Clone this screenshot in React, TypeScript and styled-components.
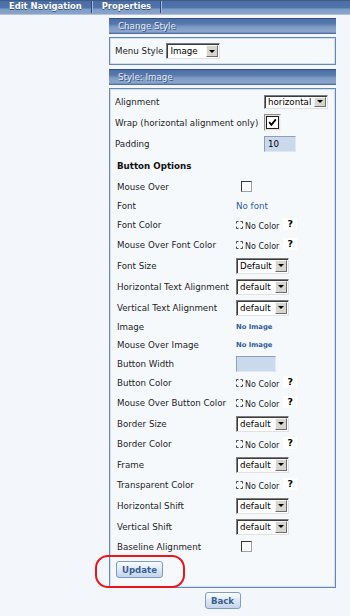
import React from 'react';
import styled, { createGlobalStyle } from 'styled-components';

const GlobalStyle = createGlobalStyle`
  html, body {
    margin: 0;
    padding: 0;
    background: #f3f7fb;
  }
  body {
    font-family: "DejaVu Sans", Verdana, sans-serif;
    font-size: 8.7px;
    color: #1c1c1c;
  }
`;

const TopBar = styled.div`
  display: flex;
  align-items: stretch;
  height: 14px;
  background: linear-gradient(
    to bottom,
    #3c4660 0,
    #4a6ea6 1px,
    #5174aa 8px,
    #7f9cc6 9px,
    #8aa4cb 14px
  );
  border-bottom: 1px solid #b4c2d8;
`;

const Tab = styled.div`
  padding: 0 9px;
  color: #fff;
  font-weight: bold;
  font-size: 8.4px;
  line-height: 13px;
  white-space: nowrap;
  text-shadow: 0 1px 0 #33507f;
`;

const TabSeparator = styled.div`
  width: 2px;
  margin: 1px 0;
  background: linear-gradient(to right, #2f4a78 50%, #a3b7d6 50%);
`;

const Main = styled.div`
  padding: 3px 14px 0 109px;
`;

const SectionHeader = styled.div<{ $gap?: number }>`
  box-sizing: border-box;
  height: 16px;
  margin-top: ${(p) => p.$gap ?? 0}px;
  padding-left: 9px;
  line-height: 15px;
  color: #e2e9f4;
  text-shadow: 1px 1px 0 #35517f;
  border-top: 1px solid #34528a;
  background: linear-gradient(
    to bottom,
    #4d6fa6 0,
    #5878ad 5px,
    #7e9bc5 8px,
    #8ca7cd 13px,
    #5e7cab 14px,
    #46659a 15px
  );
`;

const Box = styled.div<{ $pad: string }>`
  margin-top: 3px;
  border: 1px solid #6787b6;
  box-shadow: inset 0 0 0 1px #d3deec;
  background: #f6f9fc;
  padding: ${(p) => p.$pad};
`;

const InlineRow = styled.div`
  display: flex;
  align-items: center;
  gap: 3px;
`;

const SelectBox = styled.div<{ $w: number; $h?: number }>`
  display: inline-flex;
  align-items: stretch;
  box-sizing: border-box;
  width: ${(p) => p.$w}px;
  height: ${(p) => p.$h ?? 16}px;
  background: #fff;
  border: 1px solid;
  border-color: #7c7c7c #e2e2e2 #e2e2e2 #7c7c7c;
  box-shadow: inset 1px 1px 0 #3c3c3c;
  padding: 1px 1px 1px 3px;
`;

const SelectValue = styled.span`
  flex: 1;
  display: flex;
  align-items: center;
  color: #000;
  white-space: nowrap;
  overflow: hidden;
`;

const SelectArrow = styled.span`
  width: 12px;
  box-sizing: border-box;
  background: #d8d5cf;
  border: 1px solid;
  border-color: #f6f6f6 #6e6e6e #6e6e6e #f6f6f6;
  display: flex;
  align-items: center;
  justify-content: center;
  &::after {
    content: '';
    border-left: 3px solid transparent;
    border-right: 3px solid transparent;
    border-top: 3px solid #000;
  }
`;

const TopGrid = styled.div`
  display: grid;
  grid-template-columns: 149px auto;
  grid-auto-rows: 21px;
  align-items: center;
`;

const Options = styled.div`
  padding-left: 2px;
`;

const OptionsHeading = styled.div`
  height: 23px;
  display: flex;
  align-items: center;
  font-weight: bold;
  color: #111;
`;

const OptionRow = styled.div<{ $h: number }>`
  display: grid;
  grid-template-columns: 119px auto;
  align-items: center;
  height: ${(p) => p.$h}px;
`;

const Label = styled.span`
  white-space: nowrap;
`;

const Control = styled.div`
  display: flex;
  align-items: center;
`;

const CheckBox = styled.span`
  display: inline-block;
  width: 11px;
  height: 11px;
  box-sizing: border-box;
  margin-left: 5px;
  background: #fff;
  border: 1px solid;
  border-color: #3a3a3a #a0a0a0 #a0a0a0 #3a3a3a;
`;

const BigCheckFrame = styled.span`
  display: inline-flex;
  width: 17px;
  height: 17px;
  box-sizing: border-box;
  padding: 1px;
  background: #e2e2e2;
  border: 1px solid;
  border-color: #8c8c8c #f2f2f2 #f2f2f2 #8c8c8c;
`;

const BigCheckInner = styled.span`
  flex: 1;
  display: flex;
  align-items: center;
  justify-content: center;
  background: #fff;
  border: 1px solid #1e1e1e;
`;

const Field = styled.input<{ $w: number }>`
  width: ${(p) => p.$w}px;
  height: 16px;
  box-sizing: border-box;
  margin: 0;
  padding: 0 3px;
  font: inherit;
  color: #000;
  background: #cad9ec;
  border: 1px solid;
  border-color: #8c9fbd #dfe7f2 #dfe7f2 #8c9fbd;
  outline: none;
`;

const FontLink = styled.span`
  color: #2b5c9e;
`;

const ImageLink = styled.span`
  color: #2d5b9c;
  font-weight: bold;
  font-size: 6.8px;
`;

const ColorText = styled.span`
  font-size: 8px;
  margin-left: 2px;
  padding-top: 3px;
  color: #222;
`;

const Help = styled.span`
  display: inline-flex;
  align-items: center;
  justify-content: center;
  width: 14px;
  height: 12px;
  margin: -3px 0 0 4px;
  background: #fff;
  color: #000;
  font-weight: bold;
  font-size: 9.5px;
`;

const UpdateRow = styled.div`
  position: relative;
  margin-top: 5px;
  padding-left: 1px;
`;

const Oval = styled.span`
  position: absolute;
  left: -20px;
  top: -6px;
  width: 90px;
  height: 33px;
  box-sizing: border-box;
  border: 2px solid #e8161a;
  border-radius: 13px;
  pointer-events: none;
`;

const Button = styled.button<{ $w: number }>`
  display: block;
  width: ${(p) => p.$w}px;
  height: 17px;
  box-sizing: border-box;
  padding: 0;
  border: 1px solid #7f9cc4;
  border-radius: 3px;
  background: linear-gradient(#fbfdff, #dde8f5 50%, #c3d4ea);
  color: #3a5d93;
  font: bold 8.6px "DejaVu Sans", Verdana, sans-serif;
`;

const BackRow = styled.div`
  display: flex;
  justify-content: center;
  margin-top: 4px;
`;

type Kind = 'check' | 'link' | 'color' | 'select' | 'image' | 'input';

const rowHeight: Record<Kind, number> = {
  check: 19,
  link: 19,
  color: 20,
  select: 21,
  image: 18,
  input: 19,
};

const options: { label: string; kind: Kind; value?: string }[] = [
  { label: 'Mouse Over', kind: 'check' },
  { label: 'Font', kind: 'link', value: 'No font' },
  { label: 'Font Color', kind: 'color' },
  { label: 'Mouse Over Font Color', kind: 'color' },
  { label: 'Font Size', kind: 'select', value: 'Default' },
  { label: 'Horizontal Text Alignment', kind: 'select', value: 'default' },
  { label: 'Vertical Text Alignment', kind: 'select', value: 'default' },
  { label: 'Image', kind: 'image', value: 'No Image' },
  { label: 'Mouse Over Image', kind: 'image', value: 'No Image' },
  { label: 'Button Width', kind: 'input' },
  { label: 'Button Color', kind: 'color' },
  { label: 'Mouse Over Button Color', kind: 'color' },
  { label: 'Border Size', kind: 'select', value: 'default' },
  { label: 'Border Color', kind: 'color' },
  { label: 'Frame', kind: 'select', value: 'default' },
  { label: 'Transparent Color', kind: 'color' },
  { label: 'Horizontal Shift', kind: 'select', value: 'default' },
  { label: 'Vertical Shift', kind: 'select', value: 'default' },
  { label: 'Baseline Alignment', kind: 'check' },
];

const Select: React.FC<{ value: string; w: number; h?: number }> = ({ value, w, h }) => (
  <SelectBox $w={w} $h={h}>
    <SelectValue>{value}</SelectValue>
    <SelectArrow />
  </SelectBox>
);

const NoColor = () => (
  <>
    <svg width="7" height="8" viewBox="0 0 7 8">
      <path
        d="M0.5 2.5V0.5H2.5M4.5 0.5H6.5V2.5M6.5 5.5V7.5H4.5M2.5 7.5H0.5V5.5"
        fill="none"
        stroke="#444"
        strokeWidth="1"
      />
    </svg>
    <ColorText>No Color</ColorText>
    <Help>?</Help>
  </>
);

const renderControl = (kind: Kind, value?: string) => {
  switch (kind) {
    case 'check':
      return <CheckBox />;
    case 'link':
      return <FontLink>{value}</FontLink>;
    case 'image':
      return <ImageLink>{value}</ImageLink>;
    case 'color':
      return <NoColor />;
    case 'select':
      return <Select value={value ?? ''} w={53} />;
    case 'input':
      return <Field $w={40} />;
  }
};

export default function App() {
  return (
    <>
      <GlobalStyle />
      <TopBar>
        <Tab>Edit Navigation</Tab>
        <TabSeparator />
        <Tab>Properties</Tab>
        <TabSeparator />
      </TopBar>
      <Main>
        <SectionHeader>Change Style</SectionHeader>
        <Box $pad="5px">
          <InlineRow>
            <Label>Menu Style</Label>
            <Select value="Image" w={54} />
          </InlineRow>
        </Box>

        <SectionHeader $gap={4}>Style: Image</SectionHeader>
        <Box $pad="2px 5px 9px 5px">
          <TopGrid>
            <Label>Alignment</Label>
            <Control>
              <Select value="horizontal" w={64} h={14} />
            </Control>
            <Label>Wrap (horizontal alignment only)</Label>
            <Control>
              <BigCheckFrame>
                <BigCheckInner>
                  <svg width="9" height="9" viewBox="0 0 9 9">
                    <path d="M1.2 4.2L3.4 6.8L7.8 1.4" fill="none" stroke="#000" strokeWidth="1.8" />
                  </svg>
                </BigCheckInner>
              </BigCheckFrame>
            </Control>
            <Label>Padding</Label>
            <Control>
              <Field $w={32} defaultValue="10" />
            </Control>
          </TopGrid>

          <Options>
            <OptionsHeading>Button Options</OptionsHeading>
            {options.map((o) => (
              <OptionRow key={o.label} $h={rowHeight[o.kind]}>
                <Label>{o.label}</Label>
                <Control>{renderControl(o.kind, o.value)}</Control>
              </OptionRow>
            ))}
          </Options>

          <UpdateRow>
            <Button $w={47}>Update</Button>
            <Oval />
          </UpdateRow>
        </Box>

        <BackRow>
          <Button $w={36}>Back</Button>
        </BackRow>
      </Main>
    </>
  );
}
